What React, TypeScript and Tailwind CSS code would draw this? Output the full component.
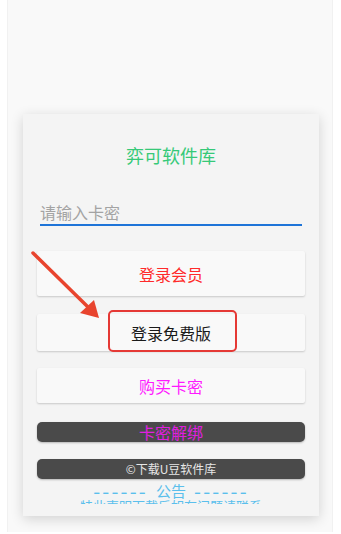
import React from "react";

const font = { fontFamily: '"Noto Sans CJK SC", "Noto Sans", sans-serif' } as React.CSSProperties;

export default function App() {
  return (
    <div className="relative h-[534px] w-[341px] overflow-hidden bg-white" style={font}>
      <div className="ml-[7px] h-[532px] w-[326px] border-x border-[#f1f1f1] bg-[#f9f9f9] pt-[114px]">
        <div className="ml-[15px] h-[402px] w-[296px] bg-[#f4f4f4] shadow-[0_3px_12px_rgba(0,0,0,0.16)]">
          <div className="pt-[29px] text-center text-[18px] leading-[24px] text-[#36c978]">弈可软件库</div>
          <div className="mx-[17px] mt-[33px] border-b-2 border-[#1e74d8] text-[16px] leading-[24px] text-[#a3a3a3]">
            请输入卡密
          </div>
          <div className="px-[14px]">
            <div className="mt-[25px] flex h-[45px] items-center justify-center rounded-[2px] bg-[#f9f9f9] text-[16px] text-[#ff2a2a] shadow-[0_1px_2px_rgba(0,0,0,0.18)]">
              登录会员
            </div>
            <div className="mt-[18px] flex h-[37px] items-center justify-center rounded-[2px] bg-[#f9f9f9] text-[16px] text-[#1a1a1a] shadow-[0_1px_2px_rgba(0,0,0,0.18)]">
              登录免费版
            </div>
            <div className="mt-[17px] flex h-[35px] items-center justify-center rounded-[2px] bg-[#f9f9f9] text-[16px] text-[#ff1aff] shadow-[0_1px_2px_rgba(0,0,0,0.18)]">
              购买卡密
            </div>
            <div className="mt-[19px] flex h-[20px] items-center justify-center rounded-[5px] bg-[#4a4a4a] text-[16px] leading-[20px] text-[#e01ee0] shadow-[0_1px_2px_rgba(0,0,0,0.25)]">
              卡密解绑
            </div>
            <div className="mt-[17px] flex h-[20px] items-center justify-center rounded-[5px] bg-[#4a4a4a] text-[12px] leading-[20px] text-[#e6e6e6] shadow-[0_1px_2px_rgba(0,0,0,0.25)]">
              ©下载U豆软件库
            </div>
            <div className="h-[25px] overflow-hidden text-center text-[#5bbfec]">
              <div className="mt-[3px] flex h-[17px] items-center justify-center gap-[8px] text-[15px] leading-[17px]">
                <span className="text-[20px] leading-[17px] tracking-[2.2px]">------</span>
                <span>公告</span>
                <span className="text-[20px] leading-[17px] tracking-[2.2px]">------</span>
              </div>
              <div className="text-[13px] leading-[14px]">特此声明下载后如有问题请联系</div>
            </div>
          </div>
        </div>
      </div>
      <div className="absolute left-[108px] top-[310px] h-[42px] w-[129px] rounded-[5px] border-2 border-[#e53935]" />
      <svg className="absolute left-0 top-0" width="341" height="534" viewBox="0 0 341 534">
        <line x1="33" y1="253" x2="90" y2="309" stroke="#e8442e" strokeWidth="3.5" strokeLinecap="round" />
        <polygon points="99,318 80,313 94,300" fill="#e8442e" />
      </svg>
    </div>
  );
}
